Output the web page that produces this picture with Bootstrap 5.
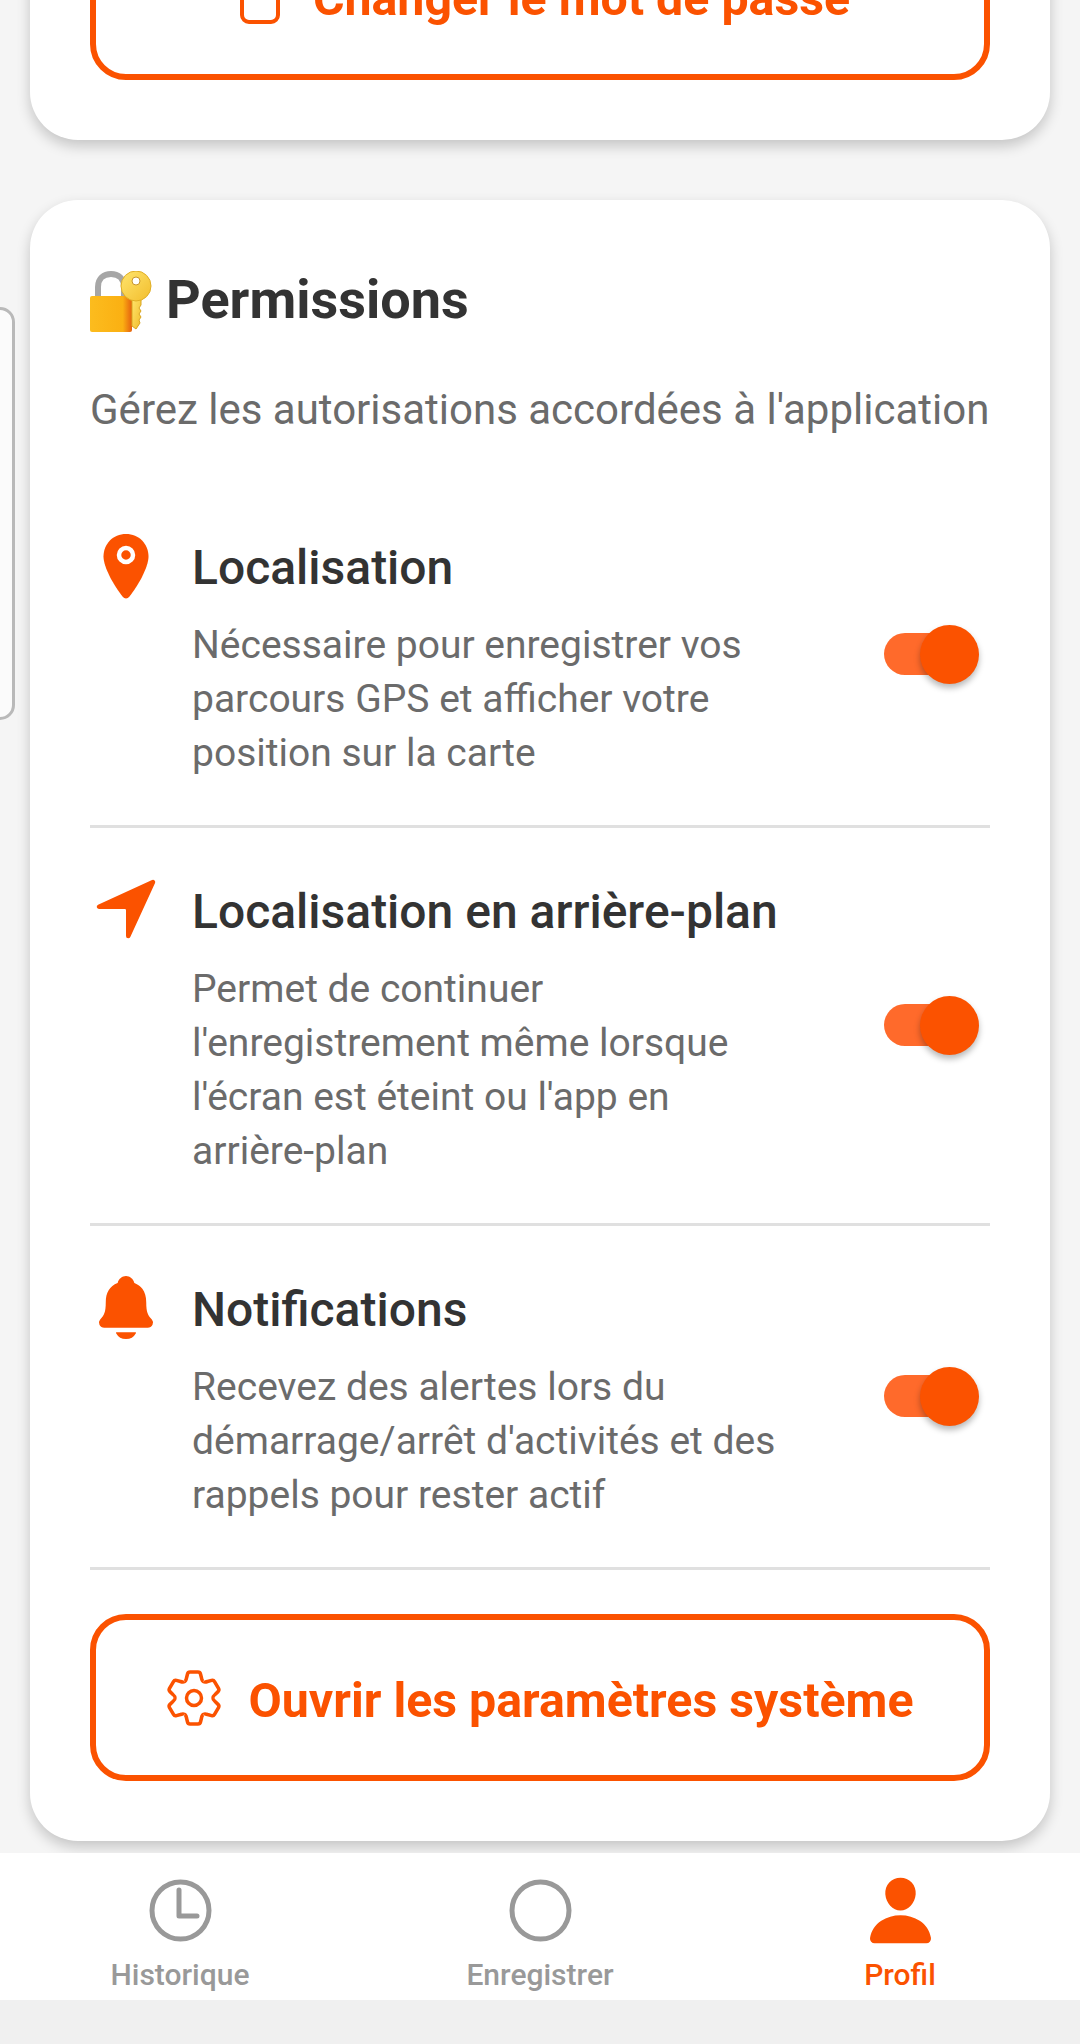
<!DOCTYPE html>
<html lang="fr">

<head>
    <meta charset="UTF-8">
    <meta name="viewport" content="width=device-width, initial-scale=1.0">
    <title>Profil</title>
    <link href="https://cdn.jsdelivr.net/npm/bootstrap@5.3.0/dist/css/bootstrap.min.css" rel="stylesheet">
    <style>
        html,
        body {
            height: 2044px;
            overflow: hidden;
        }

        body {
            background: #f0f0f0;
            font-family: Roboto, "Liberation Sans", sans-serif;
        }

        .scroll-area {
            height: 1853px;
            overflow: hidden;
            background: #f5f5f5;
            padding: 0 30px;
            position: relative;
        }

        .panel {
            border: 0;
            border-radius: 48px;
            background: #fff;
            box-shadow: 0 6px 14px rgba(0, 0, 0, 0.2);
        }

        .panel-top {
            margin-top: -147px;
            margin-bottom: 60px;
            padding: 60px;
        }

        .panel-perms {
            padding: 60px;
        }

        .outline-action {
            height: 167px;
            border: 6px solid #fb5200;
            border-radius: 36px;
            color: #fb5200;
            background: #fff;
            font-size: 48.3px;
            font-weight: 700;
            gap: 26px;
        }

        .outline-action:hover {
            color: #fb5200;
            background: #fff;
            border-color: #fb5200;
        }

        .action-clipped {
            padding-top: 12px;
            padding-left: 22px;
            gap: 33px;
        }

        .action-settings {
            margin-top: 44px;
        }

        .action-label {
            display: block;
            padding-top: 8px;
        }

        .perm-heading {
            color: #333;
            font-size: 54px;
            line-height: 80px;
            font-weight: 700;
            margin-bottom: 43px;
            gap: 14px;
        }

        .perm-heading svg {
            margin-top: 2px;
        }

        .perm-intro {
            color: #6b6b6b;
            font-size: 42px;
            line-height: 54px;
            margin-bottom: 47px;
            white-space: nowrap;
        }

        .perm-row {
            border-bottom: 3px solid #e0e0e0;
            padding: 54px 0 45px;
        }

        .perm-icon {
            width: 102px;
            flex-shrink: 0;
        }

        .perm-icon-box {
            width: 72px;
            height: 72px;
            overflow: visible;
            display: block;
        }

        .perm-body {
            width: 587px;
            flex-shrink: 0;
        }

        .perm-title {
            color: #333;
            font-size: 48px;
            line-height: 60px;
            font-weight: 500;
            margin-bottom: 20px;
        }

        .perm-text {
            color: #6b6b6b;
            font-size: 39px;
            line-height: 54px;
        }

        .toggle-wrap {
            position: relative;
            width: 95px;
            height: 59px;
            margin-left: 105px;
            margin-bottom: 10px;
            flex-shrink: 0;
        }

        .toggle-track {
            position: absolute;
            left: 0;
            top: 8px;
            width: 66px;
            height: 42px;
            border-radius: 21px;
            background: #ff6a2b;
        }

        .toggle-thumb {
            position: absolute;
            right: 0;
            top: 0;
            width: 59px;
            height: 59px;
            border-radius: 50%;
            background: #fb5200;
            box-shadow: 0 4px 6px rgba(0, 0, 0, 0.28);
        }

        .side-tab {
            position: absolute;
            left: -30px;
            top: 307px;
            width: 45px;
            height: 413px;
            background: #fbfbfb;
            border: 3px solid #b9b9b9;
            border-radius: 15px;
        }

        .tab-bar {
            height: 147px;
            background: #fff;
        }

        .tab-item {
            width: 360px;
            color: #999;
            font-size: 30px;
            line-height: 36px;
            font-weight: 500;
        }

        .tab-item.is-active {
            color: #fb5200;
        }

        .tab-icon {
            width: 75px;
            height: 75px;
            display: block;
            margin-top: 20px;
            margin-bottom: 9px;
        }
    </style>
</head>

<body>
    <main class="scroll-area">
        <div class="side-tab"></div>

        <section class="card panel panel-top">
            <button type="button" class="btn outline-action action-clipped w-100 d-flex justify-content-center align-items-center">
                <svg width="40" height="48" viewBox="0 0 40 48" fill="none" stroke="#fb5200" stroke-width="4">
                    <rect x="2" y="2" width="36" height="44" rx="7" />
                </svg>
                Changer le mot de passe
            </button>
        </section>

        <section class="card panel panel-perms">
            <h2 class="perm-heading d-flex align-items-center">
                <svg width="62" height="61" viewBox="0 0 62 61">
                    <defs>
                        <linearGradient id="lockBody" x1="0" x2="1" y1="0" y2="0">
                            <stop offset="0" stop-color="#fcbc1e" />
                            <stop offset="0.78" stop-color="#fbb012" />
                            <stop offset="1" stop-color="#e5600f" />
                        </linearGradient>
                        <linearGradient id="keyGold" x1="0" x2="1" y1="0" y2="1">
                            <stop offset="0" stop-color="#ffe56e" />
                            <stop offset="1" stop-color="#f2bd2c" />
                        </linearGradient>
                    </defs>
                    <path d="M8 28V16C8 7 14 3 21 3s13 4 13 13v12" fill="none" stroke="#a6a6a6" stroke-width="6" />
                    <rect x="0" y="25" width="42" height="36" rx="2" fill="url(#lockBody)" />
                    <path d="M42 26h9v8l-2 3 2 3-2 3 2 3-2 3 1 3-4 6-4-3z" fill="url(#keyGold)" stroke="#d9a520" />
                    <circle cx="46" cy="15" r="15" fill="url(#keyGold)" stroke="#e0ae25" />
                    <circle cx="46" cy="10" r="4" fill="#fff" stroke="#c9962a" />
                </svg>
                Permissions
            </h2>
            <p class="perm-intro">Gérez les autorisations accordées à l'application</p>

            <div class="perm-row d-flex align-items-center">
                <div class="perm-icon align-self-start">
                    <svg class="perm-icon-box" viewBox="0 0 72 72">
                        <path d="M36 -4C23 -4 13.500 6 13.500 18.500c0 11 11 30 19 40c2 2.500 5 2.500 7 0c8-10 19-29 19-40C58.500 6 49 -4 36 -4z" fill="#fb5200" />
                        <circle cx="36" cy="17" r="7" fill="#fb5200" stroke="#fff" stroke-width="4.500" />
                    </svg>
                </div>
                <div class="perm-body">
                    <div class="perm-title">Localisation</div>
                    <div class="perm-text">Nécessaire pour enregistrer vos parcours GPS et afficher votre position sur la carte</div>
                </div>
                <div class="toggle-wrap"><span class="toggle-track"></span><span class="toggle-thumb"></span></div>
            </div>

            <div class="perm-row d-flex align-items-center">
                <div class="perm-icon align-self-start">
                    <svg class="perm-icon-box" viewBox="0 64 512 512">
                        <path d="M272 464a16 16 0 01-16-16.420V264.130a8 8 0 00-8-8H64.410a16.310 16.310 0 01-15.490-10.650 16 16 0 018.410-19.870l384-176.150a16 16 0 0121.220 21.190l-176 384A16 16 0 01272 464z" fill="#fb5200" />
                    </svg>
                </div>
                <div class="perm-body">
                    <div class="perm-title">Localisation en arrière-plan</div>
                    <div class="perm-text">Permet de continuer l'enregistrement même lorsque l'écran est éteint ou l'app en arrière-plan</div>
                </div>
                <div class="toggle-wrap"><span class="toggle-track"></span><span class="toggle-thumb"></span></div>
            </div>

            <div class="perm-row d-flex align-items-center">
                <div class="perm-icon align-self-start">
                    <svg class="perm-icon-box" viewBox="0 60 512 512">
                        <path d="M440.080 341.310c-1.660-2-3.290-4-4.890-5.930-22-26.610-35.310-42.670-35.310-118 0-39-9.330-71-27.720-95-13.560-17.730-31.890-31.180-56.050-41.120a3 3 0 01-.82-.67C306.600 51.490 282.820 32 256 32s-50.590 19.490-59.280 48.560a3.130 3.130 0 01-.81.650c-56.380 23.210-83.780 67.740-83.780 136.140 0 75.360-13.290 91.420-35.310 118-1.600 1.930-3.230 3.890-4.890 5.930a35.160 35.160 0 00-4.650 37.620c6.170 13 19.320 21.070 34.330 21.070H410.500c14.940 0 28-8.060 34.190-21a35.170 35.170 0 00-4.610-37.660zM256 480a80.060 80.060 0 0070.440-42.130 4 4 0 00-3.540-5.870H189.120a4 4 0 00-3.550 5.870A80.060 80.060 0 00256 480z" fill="#fb5200" />
                    </svg>
                </div>
                <div class="perm-body">
                    <div class="perm-title">Notifications</div>
                    <div class="perm-text">Recevez des alertes lors du démarrage/arrêt d'activités et des rappels pour rester actif</div>
                </div>
                <div class="toggle-wrap"><span class="toggle-track"></span><span class="toggle-thumb"></span></div>
            </div>

            <button type="button" class="btn outline-action action-settings w-100 d-flex justify-content-center align-items-center">
                <svg width="56" height="56" viewBox="-28 -28 56 56" fill="none" stroke="#fb5200" stroke-width="3.500" stroke-linejoin="round">
                    <defs>
                        <path id="gearTooth" d="M-9.500-16.500Q-8-17-7.500-20L-6.500-24Q-6-26-4-26H4Q6-26 6.500-24L7.500-20Q8-17 9.500-16.500" />
                    </defs>
                    <use href="#gearTooth" />
                    <use href="#gearTooth" transform="rotate(60)" />
                    <use href="#gearTooth" transform="rotate(120)" />
                    <use href="#gearTooth" transform="rotate(180)" />
                    <use href="#gearTooth" transform="rotate(240)" />
                    <use href="#gearTooth" transform="rotate(300)" />
                    <circle r="7.500" />
                </svg>
                <span class="action-label">Ouvrir les paramètres système</span>
            </button>
        </section>
    </main>

    <nav class="tab-bar d-flex">
        <div class="tab-item d-flex flex-column align-items-center">
            <svg class="tab-icon" viewBox="0 0 75 75" fill="none" stroke="#999" stroke-width="5" stroke-linecap="round" stroke-linejoin="round">
                <circle cx="37.500" cy="37.500" r="28.500" />
                <path d="M36 17V43H54" />
            </svg>
            Historique
        </div>
        <div class="tab-item d-flex flex-column align-items-center">
            <svg class="tab-icon" viewBox="0 0 75 75" fill="none" stroke="#999" stroke-width="5">
                <circle cx="37.500" cy="37.500" r="28.500" />
            </svg>
            Enregistrer
        </div>
        <div class="tab-item is-active d-flex flex-column align-items-center">
            <svg class="tab-icon" viewBox="0 0 512 512">
                <path d="M332.640 64.580C313.180 43.570 286 32 256 32c-30.160 0-57.430 11.500-76.800 32.380-19.580 21.110-29.120 49.800-26.880 80.780C156.760 206.280 203.270 256 256 256s99.160-49.710 103.670-110.820c2.270-30.700-7.330-59.330-27.030-80.600zM432 480H80a31 31 0 01-24.200-11.130c-6.500-7.770-9.120-18.380-7.180-29.110C57.060 392.940 83.400 353.610 124.800 326c36.780-24.510 83.370-38 131.200-38s94.420 13.500 131.200 38c41.400 27.600 67.740 66.930 76.180 113.750 1.940 10.730-.68 21.340-7.180 29.110A31 31 0 01432 480z" fill="#fb5200" />
            </svg>
            Profil
        </div>
    </nav>

    <script src="https://cdn.jsdelivr.net/npm/bootstrap@5.3.0/dist/js/bootstrap.bundle.min.js"></script>
</body>

</html>
